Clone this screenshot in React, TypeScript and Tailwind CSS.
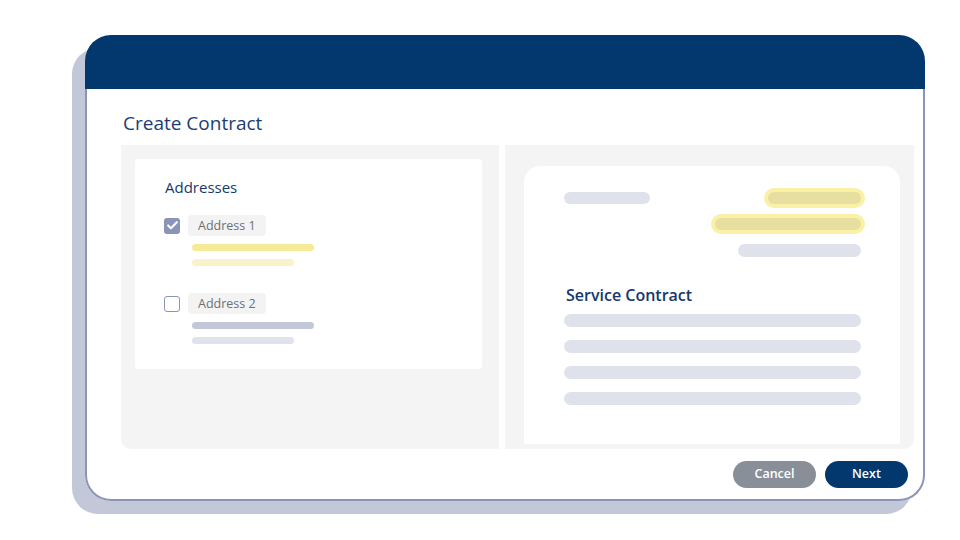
import { Check } from "lucide-react";

const font = { fontFamily: '"Open Sans", "Noto Sans", sans-serif' };

function AddressRow({ label, checked }: { label: string; checked: boolean }) {
  return (
    <div className="flex flex-col">
      <div className="flex items-center gap-2">
        {checked ? (
          <span className="w-4 h-4 rounded-[3px] bg-[#8a93b8] flex items-center justify-center">
            <Check className="w-[13px] h-[13px] text-white" strokeWidth={4} />
          </span>
        ) : (
          <span className="w-4 h-4 rounded-[3px] border-[1.5px] border-[#8a93b8] bg-white" />
        )}
        <span className="h-[21px] px-[10px] rounded-[4px] bg-[#f3f3f4] text-[12.5px] leading-[21px] text-[#6d6f75]">
          {label}
        </span>
      </div>
      <div className="pl-7 pt-2 flex flex-col gap-2">
        <div className={`w-[122px] h-[7px] rounded-full ${checked ? "bg-[#f6e998]" : "bg-[#c3c8d8]"}`} />
        <div className={`w-[102px] h-[7px] rounded-full ${checked ? "bg-[#faf3c9]" : "bg-[#e1e3ec]"}`} />
      </div>
    </div>
  );
}

export default function App() {
  return (
    <div className="w-[960px] h-[540px] bg-white overflow-hidden" style={font}>
      <div className="ml-[85px] mt-[35px] w-[840px] h-[466px] rounded-[26px] flex flex-col shadow-[-13px_13px_0_0_#c2c8d8] bg-white">
        {/* Header */}
        <div className="h-[54px] bg-[#03386f] rounded-t-[26px] shrink-0" />

        {/* Body */}
        <div className="flex-1 flex flex-col border-x-2 border-b-2 border-[#8a93b8] rounded-b-[26px]">
          <h1 className="pl-[36px] pt-[21px] h-[56px] text-[19px] leading-[26px] text-[#1d3d70]">Create Contract</h1>

          <div className="flex gap-[6px] pl-[34px] pr-[9px]">
            {/* Left panel */}
            <div className="w-[378px] h-[304px] bg-[#f4f4f4] rounded-bl-[10px] pl-[14px] pt-[14px]">
              <div className="w-[347px] h-[210px] bg-white rounded-[4px] pl-[30px] pt-[18px]">
                <h2 className="text-[15px] leading-[20px] font-medium text-[#173a6c] mb-[18px]">Addresses</h2>
                <div className="flex flex-col gap-[27px] -ml-px">
                  <AddressRow label="Address 1" checked />
                  <AddressRow label="Address 2" checked={false} />
                </div>
              </div>
            </div>

            {/* Right panel */}
            <div className="w-[409px] h-[304px] bg-[#f4f4f4] rounded-br-[10px] pl-[19px] pt-[21px]">
              <div className="w-[376px] h-[278px] bg-white rounded-t-[16px] pl-[40px] pr-[39px] pt-[26px]">
                <div className="flex justify-between">
                  <div className="w-[86px] h-[12px] rounded-full bg-[#e0e2eb]" />
                  <div className="w-[93px] h-[12px] rounded-full bg-[#e7dfa0] ring-4 ring-[#faf0a6]" />
                </div>
                <div className="flex justify-end mt-[14px]">
                  <div className="w-[146px] h-[12px] rounded-full bg-[#e7dfa0] ring-4 ring-[#faf0a6]" />
                </div>
                <div className="flex justify-end mt-[14px]">
                  <div className="w-[123px] h-[13px] rounded-full bg-[#e0e2eb]" />
                </div>
                <h2 className="mt-[27px] pl-[2px] text-[16px] leading-[22px] font-semibold text-[#16386a]">Service Contract</h2>
                <div className="mt-[8px] flex flex-col gap-[13px]">
                  <div className="w-[297px] h-[13px] rounded-full bg-[#e0e2eb]" />
                  <div className="w-[297px] h-[13px] rounded-full bg-[#e0e2eb]" />
                  <div className="w-[297px] h-[13px] rounded-full bg-[#e0e2eb]" />
                  <div className="w-[297px] h-[13px] rounded-full bg-[#e0e2eb]" />
                </div>
              </div>
            </div>
          </div>

          {/* Footer */}
          <div className="flex justify-end gap-[9px] pr-[15px] pt-[12px]">
            <button className="w-[83px] h-[27px] rounded-full bg-[#898f98] text-white text-[12.5px] font-semibold">Cancel</button>
            <button className="w-[83px] h-[27px] rounded-full bg-[#03386f] text-white text-[12.5px] font-semibold">Next</button>
          </div>
        </div>
      </div>
    </div>
  );
}
